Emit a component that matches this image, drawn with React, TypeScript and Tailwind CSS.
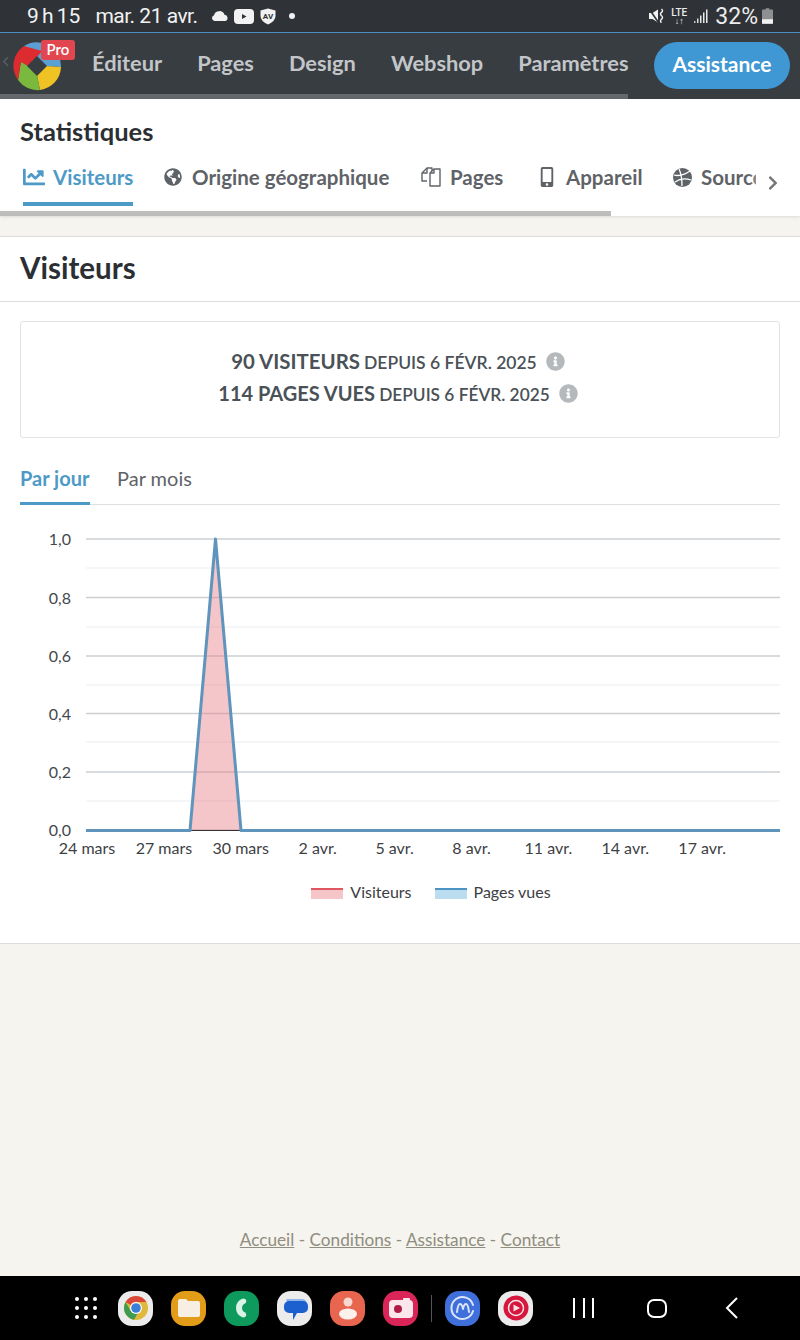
import React from 'react';
import { FaChartLine, FaGlobeAmericas, FaMobileAlt, FaInfoCircle, FaChevronRight, FaChevronLeft } from 'react-icons/fa';

const navItems = ['Éditeur', 'Pages', 'Design', 'Webshop', 'Paramètres'];
const yLabels = [
  { label: '1,0', y: 539 },
  { label: '0,8', y: 597.5 },
  { label: '0,6', y: 656 },
  { label: '0,4', y: 713.5 },
  { label: '0,2', y: 772 },
  { label: '0,0', y: 830 },
];
const minorLines = [568, 627, 685, 742, 801];
const xLabels = ['24 mars', '27 mars', '30 mars', '2 avr.', '5 avr.', '8 avr.', '11 avr.', '14 avr.', '17 avr.'];

function Logo() {
  return (
    <svg width="50" height="50" viewBox="0 0 50 50" className="shrink-0">
      <path d="M12 5 A24 24 0 0 1 49 26 L34 25 L25 16 Z" fill="#5aa0d2" />
      <path d="M25 34 L28 49 A24 24 0 0 0 49 26 L34 25 Z" fill="#f0c324" />
      <path d="M9 20 L6 39 A24 24 0 0 0 28 49 L25 34 L16 25 Z" fill="#7ab83e" />
      <path d="M12 5 A24 24 0 0 0 6 39 L9 21 L16 25 L25 16 L30 10 Z" fill="#dd2c30" />
      <path d="M25 15 L35 25 L25 35 L15 25 Z" fill="#383d42" />
    </svg>
  );
}

function StatusIcons() {
  return (
    <div className="flex items-center ml-[13px]">
      <svg width="18" height="12" viewBox="0 0 18 12"><path d="M3.500 11 A3 3 0 0 1 3 5.200 A5.500 5.500 0 0 1 13.500 4.800 A3.200 3.200 0 0 1 14.500 11 Z" fill="#f2f2f2" /></svg>
      <svg width="20" height="15" viewBox="0 0 20 15" className="ml-[5px]"><rect width="20" height="15" rx="4" fill="#f2f2f2" /><path d="M8 5 L12.500 7.500 L8 10 Z" fill="#2f3237" /></svg>
      <svg width="16" height="17" viewBox="0 0 16 17" className="ml-[6px]">
        <path d="M8 0.500 L15.500 2.500 V8 Q15.500 13 8 16.500 Q0.500 13 0.500 8 V2.500 Z" fill="#f2f2f2" />
        <text x="8" y="10.500" textAnchor="middle" fontSize="8" fontWeight="700" fill="#2f3237" fontFamily="Roboto, sans-serif">AV</text>
      </svg>
      <span className="ml-[13px] w-[6px] h-[6px] rounded-full bg-[#f2f2f2]" />
    </div>
  );
}

function StatusRight() {
  return (
    <div className="flex items-center text-[#ececec]">
      <svg width="15" height="16" viewBox="0 0 15 16">
        <path d="M0 5 H3.500 L9 1.500 V14.500 L3.500 11 H0 Z" fill="#f2f2f2" />
        <path d="M0.500 1.500 L9.500 14.500" stroke="#2f3237" strokeWidth="1.600" />
        <path d="M12.500 1 q2 1.700 0 3.400 q-2 1.700 0 3.400 q2 1.700 0 3.400 q-2 1.700 0 3.400" fill="none" stroke="#f2f2f2" strokeWidth="1.400" />
      </svg>
      <div className="ml-[7px] flex flex-col items-center w-[16px]">
        <span className="text-[10px] font-medium leading-[9px]">LTE</span>
        <span className="text-[9px] font-bold leading-[8px]">↓↑</span>
      </div>
      <svg width="14" height="15" viewBox="0 0 14 15" className="ml-[7px] mt-[1px]">
        <rect x="0" y="12" width="1.500" height="2" fill="#bfc0c1" />
        <rect x="3" y="9.500" width="1.500" height="4.500" fill="#d8d8d8" />
        <rect x="6" y="6.500" width="1.500" height="7.500" fill="#e8e8e8" />
        <rect x="9" y="3.500" width="1.500" height="10.500" fill="#e8e8e8" />
        <rect x="12" y="0.500" width="1.500" height="13.500" fill="#e8e8e8" />
      </svg>
      <span className="ml-[7px] text-[23px] leading-none">32%</span>
      <svg width="11" height="16" viewBox="0 0 12 17" className="ml-[4px]">
        <path d="M4 0 H8 V1.500 H11 A1 1 0 0 1 12 2.500 V16 A1 1 0 0 1 11 17 H1 A1 1 0 0 1 0 16 V2.500 A1 1 0 0 1 1 1.500 H4 Z" fill="#8d8f91" />
        <path d="M0 12 H12 V16 A1 1 0 0 1 11 17 H1 A1 1 0 0 1 0 16 Z" fill="#f2f2f2" />
      </svg>
    </div>
  );
}

function PagesIcon() {
  return (
    <svg width="20" height="20" viewBox="0 0 20 20" fill="none" stroke="#5f6368" strokeWidth="1.400" strokeLinejoin="round">
      <path d="M6 14 H1 V6 L6 1 H11 V5" />
      <path d="M6 1 V6 H1" />
      <path d="M9 6 L13 2 H19 V19 H9 Z" fill="#fff" />
      <path d="M13 2 V6 H9" />
    </svg>
  );
}

function SourcesIcon() {
  return (
    <svg width="19" height="19" viewBox="0 0 19 19">
      <circle cx="9.500" cy="9.500" r="9.500" fill="#5f6368" />
      <path d="M6 1 Q9 7 9 18 M1 7 Q8 9 17 3 M2 14 Q9 9 18 12" fill="none" stroke="#fff" strokeWidth="1.300" />
    </svg>
  );
}

function TabItem({ icon, label, active, widthClass }: { icon: React.ReactNode; label: string; active?: boolean; widthClass: string }) {
  return (
    <div className={`${widthClass} shrink-0 h-[47px] flex items-start gap-[8px] pt-[6px] border-b-[4px] ${active ? 'border-[#4d9ac7] text-[#4d9ac7]' : 'border-transparent text-[#5f6368]'}`}>
      <span className="w-[22px] h-[24px] flex items-center justify-center shrink-0">{icon}</span>
      <span className="text-[20.5px] font-bold leading-[24px] whitespace-nowrap">{label}</span>
    </div>
  );
}

function Chart() {
  return (
    <svg width="800" height="370" viewBox="0 510 800 370" className="block mt-[5px]">
      {minorLines.map((y) => (
        <line key={y} x1="86" x2="780" y1={y} y2={y} stroke="#ebedee" strokeWidth="1" />
      ))}
      {yLabels.map((l) => (
        <g key={l.label}>
          <line x1="86" x2="780" y1={l.y} y2={l.y} stroke="#cdd0d3" strokeWidth="1.500" />
          <text x="71" y={l.y + 6} textAnchor="end" fontSize="16" fill="#44484c">{l.label}</text>
        </g>
      ))}
      <path d="M190 830 L215.500 539 L241 830 Z" fill="#e8808a" fillOpacity="0.46" />
      <line x1="190" x2="241" y1="830.500" y2="830.500" stroke="#333" strokeWidth="1" />
      <path d="M86 830.500 H190 L215.500 539 L241 830.500 H780" fill="none" stroke="#5f94bd" strokeWidth="3" strokeLinejoin="round" />
      {xLabels.map((l, i) => (
        <text key={l} x={87 + i * 76.9} y="854" textAnchor="middle" fontSize="16" fill="#3c4043">{l}</text>
      ))}
    </svg>
  );
}

function LegendItem({ label, line, fill }: { label: string; line: string; fill: string }) {
  return (
    <div className="flex items-center gap-[7px]">
      <div className={`w-[32px] h-[11px] border-t-[2px] mt-[3px] ${line} ${fill}`} />
      <span className="text-[16px] leading-[20px] text-[#3c4043]">{label}</span>
    </div>
  );
}

function DockTile({ bg, children }: { bg: string; children: React.ReactNode }) {
  return <div className={`w-[35px] h-[35px] rounded-[14px] flex items-center justify-center ${bg}`}>{children}</div>;
}

function Dock() {
  return (
    <div className="h-[64px] bg-black flex items-center shrink-0 pl-[75px]">
      <div className="grid grid-cols-3 gap-x-[4.500px] gap-y-[5px] w-[23px]">
        {Array.from({ length: 9 }).map((_, i) => (
          <span key={i} className="w-[4px] h-[4px] rounded-full bg-white" />
        ))}
      </div>
      <div className="flex items-center gap-[18px] ml-[20px]">
        <DockTile bg="bg-[#ececec]">
          <svg width="26" height="26" viewBox="0 0 26 26">
            <circle cx="13" cy="13" r="12" fill="#e0b93a" />
            <path d="M13 1 A12 12 0 0 1 23.400 7 H13 A6 6 0 0 0 7.800 10 L2.600 7 A12 12 0 0 1 13 1 Z" fill="#d9483b" />
            <path d="M2.600 7 A12 12 0 0 0 11 24.800 L16 16 A6 6 0 0 1 7.800 16 Z" fill="#3f9a52" />
            <circle cx="13" cy="13" r="6" fill="#fff" />
            <circle cx="13" cy="13" r="4.800" fill="#3c7fd9" />
          </svg>
        </DockTile>
        <DockTile bg="bg-[#e39c17]">
          <svg width="22" height="18" viewBox="0 0 22 18"><path d="M2 0 H8 L10 2 H20 A2 2 0 0 1 22 4 V16 A2 2 0 0 1 20 18 H2 A2 2 0 0 1 0 16 V2 A2 2 0 0 1 2 0 Z" fill="#f6efe2" /></svg>
        </DockTile>
        <DockTile bg="bg-[#0d9a5c]">
          <svg width="12" height="22" viewBox="0 0 14 22"><path d="M8 0 Q12 0 12 3 Q12 6 9 6.500 Q7 8 7 11 Q7 14 9 15.500 Q12 16 12 19 Q12 22 8 22 Q0 19 0 11 Q0 3 8 0 Z" fill="#d9f3e5" /></svg>
        </DockTile>
        <DockTile bg="bg-[#ececec]">
          <svg width="26" height="28" viewBox="0 0 26 28">
            <path d="M4 5 H20 A5 5 0 0 1 25 10 H6 Z" fill="#8fb5ea" />
            <path d="M7 7 H21 A5 5 0 0 1 26 12 V14 A5 5 0 0 1 21 19 H15 L11 26 V19 H7 A5 5 0 0 1 2 14 V12 A5 5 0 0 1 7 7 Z" fill="#1c60d0" />
          </svg>
        </DockTile>
        <DockTile bg="bg-[#e8654f]">
          <svg width="20" height="24" viewBox="0 0 20 24"><circle cx="10" cy="6" r="4.500" fill="#f8d8cf" /><ellipse cx="10" cy="18" rx="9" ry="5.500" fill="#fdf1ed" /></svg>
        </DockTile>
        <DockTile bg="bg-[#d92558]">
          <svg width="24" height="20" viewBox="0 0 24 20"><rect y="2" width="24" height="18" rx="4" fill="#fbe6ec" /><rect x="14" y="0" width="7" height="4" rx="1" fill="#fbe6ec" /><circle cx="9" cy="11" r="4" fill="#b01b45" /></svg>
        </DockTile>
      </div>
      <div className="w-px h-[27px] bg-[#555] ml-[13px]" />
      <div className="flex items-center gap-[18px] ml-[13px]">
        <DockTile bg="bg-[#3f6fdb]">
          <svg width="26" height="26" viewBox="0 0 26 26" fill="none" stroke="#dbe6fb" strokeWidth="2" strokeLinecap="round" strokeLinejoin="round">
            <path d="M23 16 A11 11 0 1 1 23 10" />
            <path d="M7 17 Q8 9 10 9 Q12 9 13 14 Q14 9 16 9 Q18 9 19 17" />
          </svg>
        </DockTile>
        <DockTile bg="bg-[#ececec]">
          <svg width="26" height="26" viewBox="0 0 26 26">
            <circle cx="13" cy="13" r="12.500" fill="#d6163c" />
            <circle cx="13" cy="13" r="7.500" fill="none" stroke="#fbe2e7" strokeWidth="1.500" />
            <path d="M10.500 9.500 L17 13 L10.500 16.500 Z" fill="#fbe2e7" />
          </svg>
        </DockTile>
      </div>
      <div className="flex items-center ml-[40px] gap-[7.500px]">
        <span className="w-[2px] h-[20px] bg-white" />
        <span className="w-[2px] h-[20px] bg-white" />
        <span className="w-[2px] h-[20px] bg-white" />
      </div>
      <div className="w-[20px] h-[19px] rounded-[7px] border-2 border-white ml-[53px]" />
      <svg width="14" height="22" viewBox="0 0 14 22" className="ml-[58px]"><path d="M12 1 L2 11 L12 21" fill="none" stroke="#fff" strokeWidth="2" /></svg>
    </div>
  );
}

export default function App() {
  return (
    <div className="w-[800px] h-[1340px] flex flex-col overflow-hidden bg-[#f6f4ef] font-['Lato',sans-serif]">
      <div className="h-[32px] shrink-0 bg-[#2f3237] flex items-center justify-between pl-[27px] pr-[27px] font-['Roboto',sans-serif] text-[#f2f2f2]">
        <div className="flex items-center">
          <span className="text-[21px] leading-none [word-spacing:-2px]">9 h 15</span>
          <span className="text-[21px] leading-none ml-[15px] tracking-[-0.5px]">mar. 21 avr.</span>
          <StatusIcons />
        </div>
        <StatusRight />
      </div>

      <div className="relative h-[67px] shrink-0 bg-[#383d42] border-t border-[#4a8fc0] flex items-center pl-[12px]">
        <FaChevronLeft className="absolute left-0 top-[23px] text-[#555a5e]" size={11} />
        <div className="relative">
          <Logo />
          <span className="absolute left-[29px] top-[-1px] w-[34px] h-[20px] rounded-[3px] bg-[#e2474f] text-white text-[15px] leading-[19px] text-center font-semibold">Pro</span>
        </div>
        <nav className="flex items-center gap-[35px] ml-[30px] mb-[6px]">
          {navItems.map((n) => (
            <span key={n} className="text-[21.8px] font-bold text-[#c3c6c9] leading-none">{n}</span>
          ))}
        </nav>
        <button className="absolute left-[654px] top-[9px] w-[136px] h-[47px] rounded-full bg-[#3f98d4] text-white text-[21px] font-bold pb-[4px] leading-none">Assistance</button>
        <div className="absolute left-0 bottom-0 w-[628px] h-[5px] bg-[#66696c]" />
      </div>

      <div className="relative h-[117px] shrink-0 bg-white pl-[20px] shadow-[0_1px_3px_rgba(0,0,0,0.1)]">
        <h1 className="text-[25.5px] font-bold text-[#2b2f33] leading-[30px] pt-[17px] h-[51px]">Statistiques</h1>
        <div className="flex w-[736px] overflow-hidden mt-[9px] pl-[3px]">
          <TabItem widthClass="w-[110px]" active label="Visiteurs" icon={<FaChartLine size={22} />} />
          <div className="w-[29px] shrink-0" />
          <TabItem widthClass="w-[229px]" label="Origine géographique" icon={<FaGlobeAmericas size={18} />} />
          <div className="w-[29px] shrink-0" />
          <TabItem widthClass="w-[86px]" label="Pages" icon={<PagesIcon />} />
          <div className="w-[30px] shrink-0" />
          <TabItem widthClass="w-[106px]" label="Appareil" icon={<FaMobileAlt size={20} />} />
          <div className="w-[29px] shrink-0" />
          <TabItem widthClass="w-[120px]" label="Sources" icon={<SourcesIcon />} />
        </div>
        <div className="absolute left-[748px] top-0 bottom-[5px] w-[30px] bg-gradient-to-r from-transparent to-white" />
        <FaChevronRight className="absolute left-[765px] top-[76px] text-[#777]" size={16} />
        <div className="absolute left-0 bottom-0 w-[611px] h-[5px] bg-[#bdbdbb]" />
      </div>

      <div className="mt-[20px] shrink-0 bg-white border-y border-[#dcdcd8] h-[708px]">
        <h2 className="h-[65px] border-b border-[#dcdcdc] pl-[20px] pb-[1px] text-[29.5px] font-bold text-[#2b2f33] flex items-center">Visiteurs</h2>
        <div className="mx-[20px] mt-[19px] h-[117px] border border-[#e2e3e4] rounded-[3px] flex flex-col items-center justify-center gap-[10px] pb-[5px] pr-[4px] text-[#4a5157]">
          <div className="flex items-center gap-[9px] h-[22px]">
            <span><b className="text-[20.4px] font-bold">90 VISITEURS</b> <span className="text-[17.5px] font-semibold">DEPUIS 6 FÉVR. 2025</span></span>
            <FaInfoCircle className="text-[#b5b9bc]" size={19} />
          </div>
          <div className="flex items-center gap-[9px] h-[22px]">
            <span><b className="text-[20px] font-bold">114 PAGES VUES</b> <span className="text-[17.3px] font-semibold">DEPUIS 6 FÉVR. 2025</span></span>
            <FaInfoCircle className="text-[#b5b9bc]" size={19} />
          </div>
        </div>
        <div className="mx-[20px] mt-[17px] h-[50px] border-b border-[#dfe0e1] flex text-[20px]">
          <div className="w-[70px] h-[50px] border-b-[3px] border-[#4d9ac7] text-[#4d9ac7] font-bold flex items-center pb-[1px] whitespace-nowrap">Par jour</div>
          <div className="ml-[27px] h-[50px] text-[#5f6368] flex items-center pb-[4px]">Par mois</div>
        </div>
        <Chart />
        <div className="flex justify-center gap-[23px] mt-[2px] pl-[62px]">
          <LegendItem label="Visiteurs" line="border-[#e0575f]" fill="bg-[#f6c5c8]" />
          <LegendItem label="Pages vues" line="border-[#4d93c4]" fill="bg-[#bcdcf0]" />
        </div>
      </div>

      <div className="flex-1 flex items-end justify-center pb-[23px] text-[17.2px] text-[#8f8d80]">
        <span><u>Accueil</u> - <u>Conditions</u> - <u>Assistance</u> - <u>Contact</u></span>
      </div>

      <Dock />
    </div>
  );
}
